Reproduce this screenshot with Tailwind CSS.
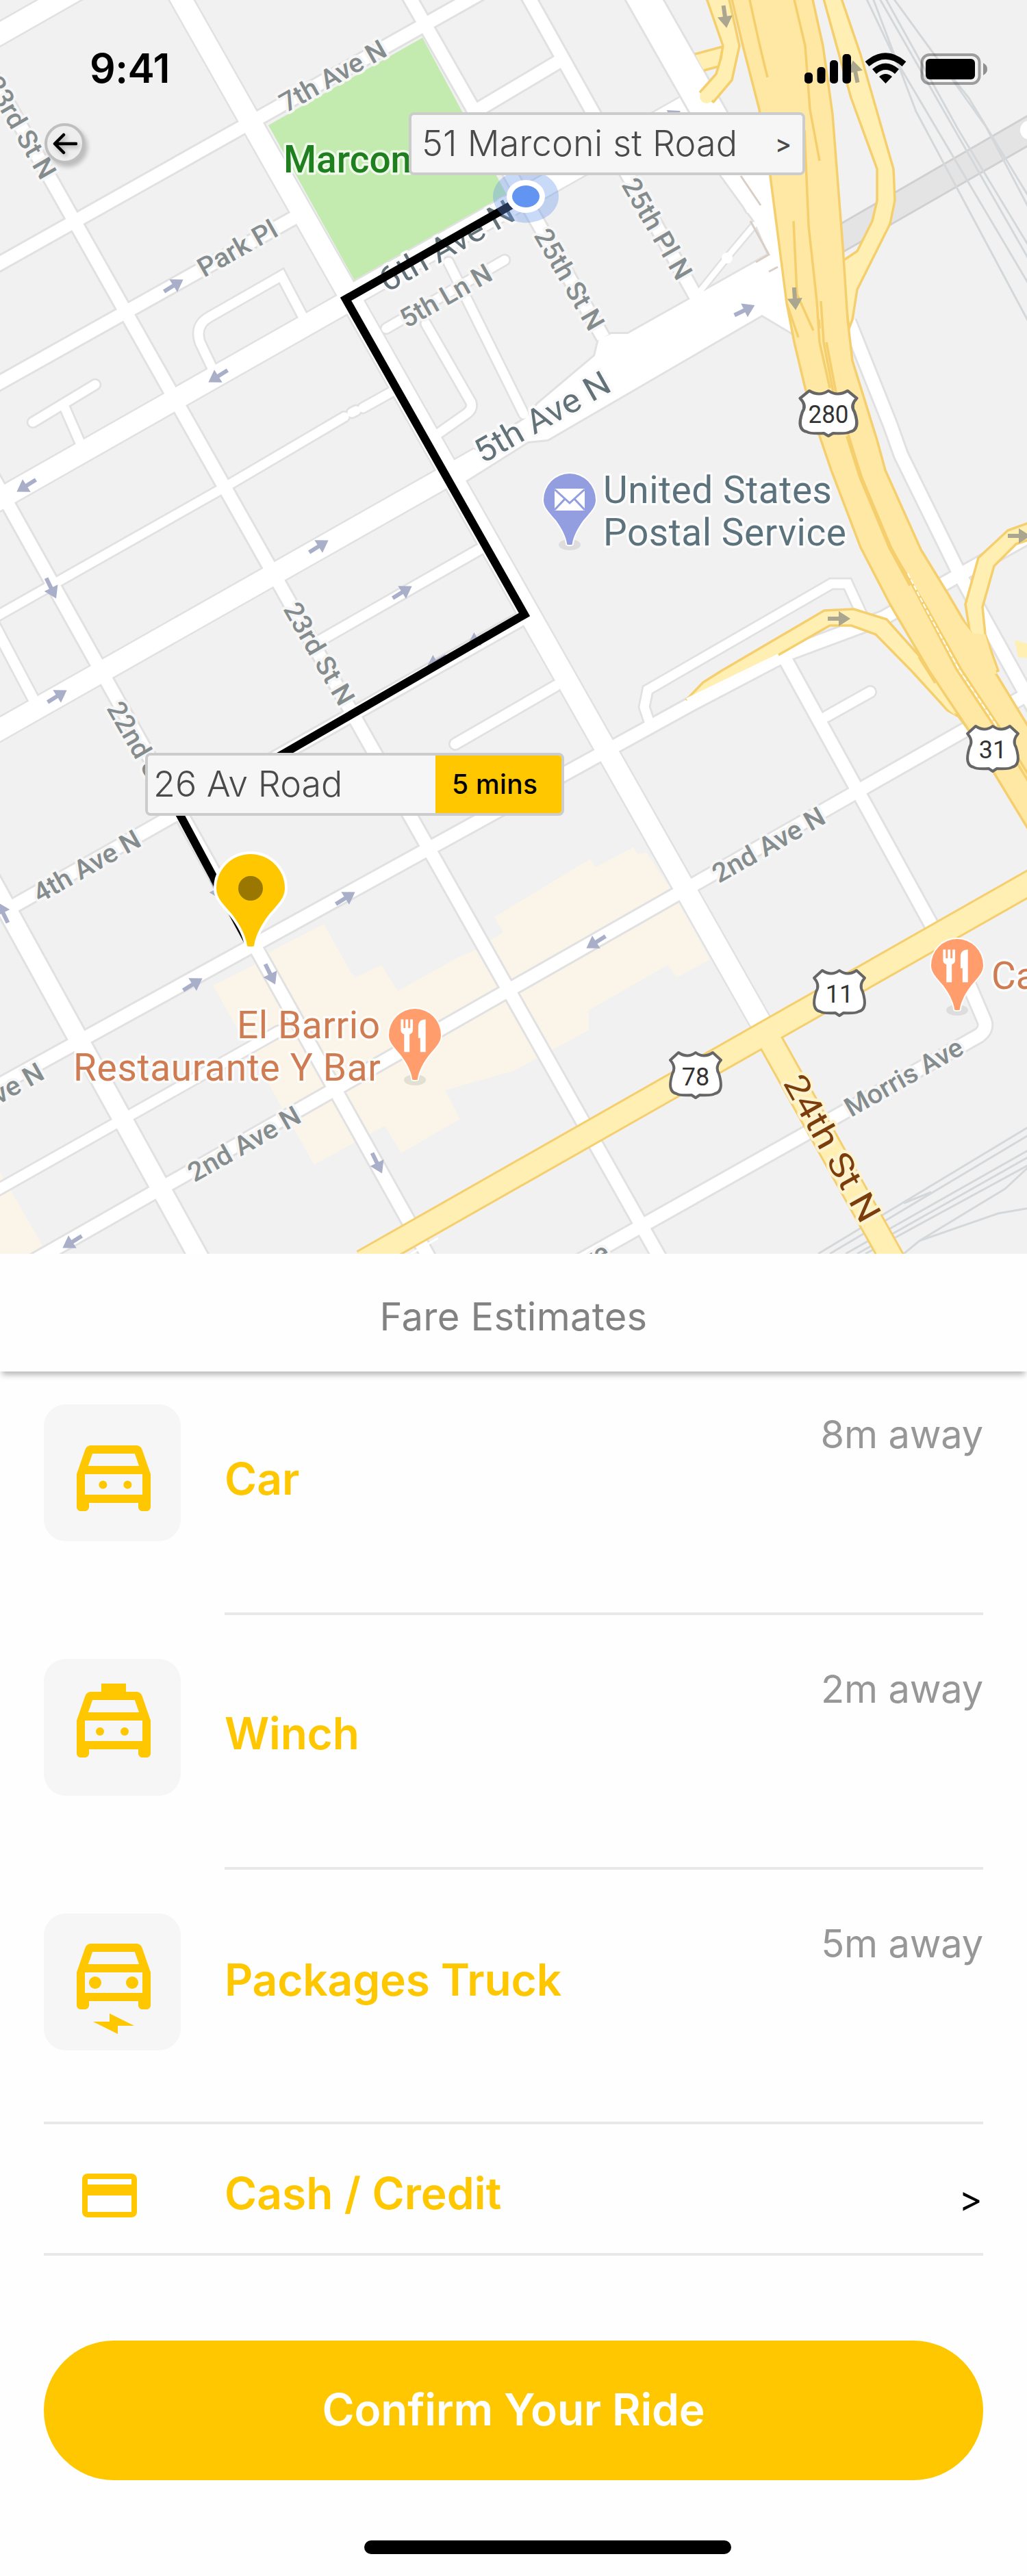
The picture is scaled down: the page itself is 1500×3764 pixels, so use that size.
<!DOCTYPE html>
<html lang="en">
<head>
<meta charset="utf-8">
<title>Fare Estimates</title>
<script src="https://cdn.jsdelivr.net/npm/@tailwindcss/browser@4"></script>
</head>
<body class="bg-white font-['Inter',sans-serif]">
<main class="w-[1500px] h-[3764px] flex flex-col bg-[#fefefe] overflow-hidden">

<!-- Map -->
<section class="relative h-[1832px] w-full shrink-0 overflow-hidden">
<svg class="block w-[1500px] h-[1832px]" viewBox="0 0 1500 1832" fill="none">
<defs>
<path id="w46" d="M930-20L1112 300"/>
<path id="w30" d="M254-20L1124 1517M-40 72L120-19M-20 1077L700 669M500 439L1000 156M-30 746L500 445"/>
<path id="w27" d="M-20 1274L300 1855"/>
<path id="w18" d="M-85-20L971 1851M-20 396L702-10M-20 570L430 318M589-20L881 493M763-20L1020 440M-20 680L634 1851M690 165L816 90M0 1335L764 903M-20 1596L1011 1028L1150 955L1290 903L1396 843L1500 785M34 1851L1500 1015M1148 965L1364 1358M1240 470L1300 620L1316 665L1402 840L1510 1035M840 1846L1176 1657L1430 1513Q1442 1504 1438 1492L1405 1415"/>
<path id="w15" d="M665 1087L812 1002M1207 1047L1271 1011M-20 1748L407 1507M-30 872L48 1020M700 803L455 943"/>
<path id="w13" d="M48 617L139 562M93 592L117 647M-20 909L328 712L503 609M514 603L520 600M530 596L575 571M311 540L292 500Q284 475 306 463L411 403L442 462M564 480L737 380M655 383L765 605M622 473L688 588Q691 597 682 604L638 635M950 1060L941 1033L946 1008L1214 853H1238L1262 905"/>
<path id="ave5" d="M655 682L767 612L786 590L869 520L875 495L893 488H917L1006 438L1123 372L1102 323L1054 257L1040 230L1140 230L1180 500L1113 460L1044 500L800 642L771 645L665 712Z"/>
<path id="pin" d="M0 135C-1 135-5 135-5 134C-7 118-17 101-27 88C-40 73-50 64-50 50A50 50 0 0 1 50 50C50 64 40 73 27 88C17 101 7 118 5 134C5 135 1 135 0 135Z"/>
<path id="arrow" d="M-17-3H-1V-11L16 0L-1 11V3H-17Z"/>
<path id="shield" d="M-25-33Q-12-24 0-33Q12-24 25-33L37-22Q28-12 34-2Q42 24 28 27Q24 30 6 29L0 33L-6 29Q-24 30-28 27Q-42 24-34-2Q-28-12-37-22Z" fill="#fff" stroke="#666" stroke-width="4" stroke-linejoin="round"/>
<g id="fork" fill="#fff"><path d="M-21-31h4v17h3v-17h4v17h3v-17h4v21q0 5-5 8v34h-8v-34q-5-3-5-8zM5-17q0-14 11-14v63h-8v-27h-3z"/></g>
</defs>
<rect width="1500" height="1832" fill="#f1f1f1"/>
<!-- beige commercial blocks -->
<path fill="#fbf4e8" d="M311 1440L371 1410L390 1393L473 1350L512 1420L519 1428L557 1410L581 1448L667 1400L696 1387L735 1362L722 1340L750 1323L862 1255L870 1267L925 1238L931 1248L944 1245L980 1300L1037 1402L989 1428L975 1410L848 1483L860 1505L750 1565L650 1593L672 1635L586 1685L562 1645L540 1657L459 1702Z"/>
<path fill="#fbf4e8" d="M650 1593L860 1473L860 1505L800 1536L745 1538ZM0 1712L62 1820L43 1832H0Z"/>
<!-- park -->
<path fill="#c3ebb0" d="M617 55L392 183L519 412L742 288Z"/>
<!-- rail corridor -->
<path fill="#e4e4e4" stroke="#d0d0d0" stroke-width="3" d="M1228 327L1510 164V208L1228 370Z"/>
<g stroke="#d4d8da" stroke-width="3">
<path d="M1264-5L1314 100L1338 163L1510 485M1274-5L1310 90L1510 428M1283-5L1510 392M1292-5L1400 190L1510 372M1303-5L1367 83L1415 143L1510 300M1390 115L1440 185L1510 318"/>
<path d="M1195 1832L1510 1642M1212 1832L1510 1654M1235 1832L1510 1676M1252 1832L1510 1686M1264 1832L1510 1698M1320 1832L1343 1813L1468 1737L1510 1698M1343 1813L1458 1773L1510 1764M1320 1758L1360 1742"/>
</g>
<circle cx="1504" cy="190" r="14" fill="#fff"/>
<!-- street casing -->
<g stroke="#e1e1e1">
<use href="#w46" stroke-width="52"/><use href="#w30" stroke-width="35"/><use href="#w27" stroke-width="33"/><use href="#w18" stroke-width="24.500"/>
<g stroke-linecap="round"><use href="#w15" stroke-width="20"/><use href="#w13" stroke-width="18.500"/></g>
<use href="#ave5" stroke-width="6"/>
<path d="M1022 426L1062 376L1104 326" stroke-width="13"/>
</g>
<!-- street surface -->
<g stroke="#fff">
<use href="#w46" stroke-width="46"/><use href="#w30" stroke-width="30"/><use href="#w27" stroke-width="27"/><use href="#w18" stroke-width="18.500"/>
<g stroke-linecap="round"><use href="#w15" stroke-width="14.500"/><use href="#w13" stroke-width="13"/></g>
<use href="#ave5" fill="#fff" stroke="none"/>
<path d="M1022 426L1062 376L1104 326" stroke-width="8"/>
</g>
<circle cx="1062" cy="377" r="8" fill="#fff"/>
<path stroke="#d9cfc6" stroke-width="3" d="M1082 257L1111 300M1096 323L1123 372L1104 383M1123 397L1136 390"/>
<!-- secondary yellow roads -->
<g stroke-linejoin="round">
<path d="M530 1844L1520 1281M1120 1512L1309 1850" stroke="#f5cf6d" stroke-width="38"/>
<path d="M530 1844L1520 1281M1120 1512L1309 1850" stroke="#ffefb3" stroke-width="32"/>
<path d="M600 1832L640 1809" stroke="#fff" stroke-width="3"/>
<g stroke="#f5cf6d" stroke-width="3.500" fill="#ffefb3">
<path d="M1003 1022L1027 997L1054 980L1204 892L1247 890L1295 905L1362 980L1430 1080L1415 1067L1400 1047L1384 1038L1331 980L1279 927L1243 914H1212L1137 957Z"/>
<path d="M1202-5L1243 143L1281 247V293L1274 323L1252 367L1228 383L1240 480L1245 467L1252 423L1300 327L1307 293L1305 247L1257 80L1228-5Z"/>
<path d="M1505 763L1472 775L1429 815L1410 883L1417 927L1440 985L1458 980L1439 927L1435 887L1452 827L1484 795L1505 788Z"/>
<path d="M1015 79L1056 68L1050 97L1028 103"/>
<path d="M1031-5L1056 67L1053 85L1046 108L1023 134L1042 149L1069 117L1080 67L1064-5Z"/>
<path d="M1482 935L1505 942V962L1487 960" stroke="none"/>
</g>
<path d="M1003 1022L1137 957" stroke="#fff" stroke-width="4"/>
<circle cx="1032" cy="141" r="10" fill="#ffefb3"/>
<!-- highway -->
<path fill="#fee8a3" stroke="#f5cf6d" stroke-width="3.500" d="M1068-5L1085 67L1109 160L1125 257L1149 443L1160 500L1176 567L1197 637L1214 687L1257 800L1300 883L1357 980L1415 1067L1451 1128L1510 1225V1075L1460 993L1430 945L1386 870L1345 803L1293 687L1281 643L1245 527L1238 467L1231 360L1216 167L1202 67L1186-5Z"/>
<path fill="#fee8a3" d="M1400 900L1420 925L1439 927L1456 985L1420 980Z"/>
<path fill="#ffefb3" d="M1322 960L1345 962L1396 1046L1384 1036Z"/>
<g stroke="#f5cf6d" stroke-width="3.500">
<path d="M1094-5Q1110 70 1121 113M1159-5L1176 67L1183 160L1197 235M1175 190L1181 330L1193 440L1197 500L1212 567M1159 323L1164 430L1188 483M1149 443L1166 493M1199 440L1203 500L1217 573M1207 500L1221 573L1257 697L1300 800L1353 887L1405 980L1458 1060L1510 1145"/>
<path stroke-width="6" d="M1238 637L1257 697L1300 800L1330 855"/>
<path d="M1196 467L1197 480M1330 850L1397 978L1458 1070L1510 1155M1342 960L1366 998"/>
</g>
<path stroke="#fff" stroke-width="2" stroke-dasharray="7 3" d="M1326 838L1350 885L1401 979L1458 1064"/>
</g>

<!-- one-way arrows -->
<g fill="#a9aec9">
<use href="#arrow" transform="translate(254 417) rotate(-32)"/><use href="#arrow" transform="translate(318 550) rotate(148)"/><use href="#arrow" transform="translate(38 710) rotate(148)"/><use href="#arrow" transform="translate(75 860) rotate(64)"/><use href="#arrow" transform="translate(466 798) rotate(-32)"/><use href="#arrow" transform="translate(588 865) rotate(-32)"/><use href="#arrow" transform="translate(1088 453) rotate(-26)"/><use href="#arrow" transform="translate(980 170) rotate(-30)"/><use href="#arrow" transform="translate(84 1017) rotate(-32)"/><use href="#arrow" transform="translate(505 1312) rotate(-32)"/><use href="#arrow" transform="translate(4 1333) rotate(-116)"/><use href="#arrow" transform="translate(870 1377) rotate(148)"/><use href="#arrow" transform="translate(282 1438) rotate(-32)"/><use href="#arrow" transform="translate(395 1424) rotate(64)"/><use href="#arrow" transform="translate(551 1700) rotate(64)"/><use href="#arrow" transform="translate(105 1815) rotate(148)"/><use href="#arrow" transform="translate(697 934) rotate(150)"/><use href="#arrow" transform="translate(637 967) rotate(150)"/><use href="#arrow" transform="translate(316 1300) rotate(64)"/>
</g>
<g fill="#aaa68f">
<use href="#arrow" transform="translate(1059 25) rotate(82)"/><use href="#arrow" transform="translate(1161 437) rotate(86)"/><use href="#arrow" transform="translate(1249 104) rotate(-102)"/><use href="#arrow" transform="translate(1226 904)"/><use href="#arrow" transform="translate(1489 783)"/>
</g>

<!-- street names -->
<g class="font-['Roboto',sans-serif] font-medium" font-size="39" fill="#858c8d" stroke="#f6f6f6" stroke-width="8" stroke-linejoin="round" paint-order="stroke">
<text transform="translate(418 165) rotate(-29.500)" textLength="172" lengthAdjust="spacingAndGlyphs">7th Ave N</text>
<text transform="translate(298 406) rotate(-29.500)" textLength="127" lengthAdjust="spacingAndGlyphs">Park Pl</text>
<text transform="translate(594 480) rotate(-29.500)" textLength="147" lengthAdjust="spacingAndGlyphs">5th Ln N</text>
<text transform="translate(779 344) rotate(60)" textLength="164" lengthAdjust="spacingAndGlyphs">25th St N</text>
<text transform="translate(907 270) rotate(60)" textLength="164" lengthAdjust="spacingAndGlyphs">25th Pl N</text>
<text transform="translate(-23 121) rotate(60)" textLength="166" lengthAdjust="spacingAndGlyphs">23rd St N</text>
<text transform="translate(413 890) rotate(60)" textLength="166" lengthAdjust="spacingAndGlyphs">23rd St N</text>
<text transform="translate(155 1035) rotate(60)" textLength="172" lengthAdjust="spacingAndGlyphs">22nd St N</text>
<text transform="translate(58 1320) rotate(-29.500)" textLength="173" lengthAdjust="spacingAndGlyphs">4th Ave N</text>
<text transform="translate(-85 1661) rotate(-29.500)" textLength="175" lengthAdjust="spacingAndGlyphs">3rd Ave N</text>
<text transform="translate(284 1728) rotate(-29.500)" textLength="182" lengthAdjust="spacingAndGlyphs">2nd Ave N</text>
<text transform="translate(1050 1291) rotate(-29.500)" textLength="182" lengthAdjust="spacingAndGlyphs">2nd Ave N</text>
<text transform="translate(1243 1633) rotate(-29.500)" textLength="192" lengthAdjust="spacingAndGlyphs">Morris Ave</text>
<text transform="translate(726 1932) rotate(-29.500)" textLength="192" lengthAdjust="spacingAndGlyphs">Morris Ave</text>
</g>
<g class="font-['Roboto',sans-serif]" font-size="49" fill="#627278" stroke="#fafafa" stroke-width="8" stroke-linejoin="round" paint-order="stroke">
<text transform="translate(565 428) rotate(-29.500)" textLength="219" lengthAdjust="spacingAndGlyphs">6th Ave N</text>
<text transform="translate(705 678) rotate(-29.500)" textLength="219" lengthAdjust="spacingAndGlyphs">5th Ave N</text>
<text transform="translate(1143 1582) rotate(61)" textLength="238" lengthAdjust="spacingAndGlyphs" fill="#7b3d0c" stroke="#fdf3cf">24th St N</text>
</g>
<g class="font-['Roboto',sans-serif]" font-size="55" stroke="#fff" stroke-opacity=".75" stroke-width="7" stroke-linejoin="round" paint-order="stroke">
<g fill="#5c737e"><text x="881" y="735" textLength="334">United States</text><text x="881" y="797" textLength="355">Postal Service</text></g>
<g fill="#cf7c52"><text x="346" y="1517" textLength="209">El Barrio</text><text x="107" y="1579" textLength="449">Restaurante Y Bar</text><text x="1448" y="1445">Cafe</text></g>
<text x="414" y="252" fill="#1f7f1f" class="font-medium">Marconi</text>
</g>

<!-- route shields -->
<g class="font-['Roboto',sans-serif]" font-size="36" fill="#333" text-anchor="middle">
<use href="#shield" transform="translate(1210 604) scale(1.12 1)"/><text x="1210" y="618" textLength="59" lengthAdjust="spacingAndGlyphs">280</text>
<use href="#shield" transform="translate(1450 1094)"/><text x="1450" y="1108">31</text>
<use href="#shield" transform="translate(1226 1451)"/><text x="1226" y="1465">11</text>
<use href="#shield" transform="translate(1016 1571)"/><text x="1016" y="1586">78</text>
</g>

<!-- places -->
<ellipse cx="832" cy="796" rx="16" ry="8" fill="#ddd"/><ellipse cx="606" cy="1578" rx="16" ry="8" fill="#e2dfd3"/><ellipse cx="1398" cy="1476" rx="16" ry="8" fill="#ddd"/>
<g stroke="#fff" stroke-width="5" paint-order="stroke">
<use href="#pin" transform="translate(832 692) scale(.76 .77)" fill="#929ee0"/>
<use href="#pin" transform="translate(606 1474) scale(.76 .77)" fill="#ff9e6c"/>
<use href="#pin" transform="translate(1398 1372) scale(.76 .77)" fill="#ff9e6c"/>
</g>
<path fill="#fff" d="M810 714H854V746H810Z"/><path stroke="#929ee0" stroke-width="3" d="M810 715L832 735L854 715M810 745L826 728M854 745L838 728"/>
<use href="#fork" transform="translate(606 1513) scale(.98 .76)"/><use href="#fork" transform="translate(1398 1411) scale(.98 .76)"/>

<!-- trip route -->
<path stroke="#000" stroke-width="12" d="M769 287L505 437L766 898L262 1189L366 1383"/>
<ellipse cx="768" cy="287" rx="48" ry="38.500" fill="#6495ed" fill-opacity=".35"/>
<ellipse cx="768" cy="287" rx="28" ry="24" fill="#fff"/><ellipse cx="768" cy="287" rx="20" ry="16" fill="#6294f2"/>
<use href="#pin" transform="translate(366 1248)" fill="#ffc700" stroke="#fff" stroke-width="8" paint-order="stroke"/>
<circle cx="366" cy="1298" r="18" fill="#997700"/>

<!-- status bar glyphs -->
<g fill="#000">
<rect x="1175" y="106" width="12" height="16" rx="5"/><rect x="1193.500" y="98" width="12" height="24" rx="5"/><rect x="1212" y="88" width="12" height="34" rx="5"/><rect x="1230.500" y="79" width="12.500" height="43" rx="5"/>
<path d="M1293.500 122L1284 112Q1293.500 104 1303 112Z"/>
</g>
<path stroke="#000" stroke-width="9" d="M1277 104.500Q1293.500 90 1310 104.500M1266.500 93.500Q1293.500 70.500 1320.500 93.500"/>
<rect x="1346.500" y="80" width="84" height="42" rx="11" stroke="#000" stroke-opacity=".35" stroke-width="4"/>
<rect x="1352" y="86" width="72" height="30" rx="6" fill="#000"/>
<path d="M1436 92Q1442 95 1442 101Q1442 107 1436 110Z" fill="#000" fill-opacity=".4"/>
</svg>

<div class="absolute left-[131px] top-[69px] text-[59px] leading-[62px] font-semibold tracking-[-0.5px] text-black whitespace-nowrap">9:41</div>
<div class="absolute left-[65px] top-[180px] size-[59px] rounded-full border-[4px] border-[#bfbfbf] bg-[#eeeeee] shadow-[4px_5px_6px_rgba(0,0,0,0.22)] flex items-center justify-center">
<svg class="w-[36px] h-[32px] drop-shadow-[3px_3px_3px_rgba(0,0,0,0.3)]" viewBox="0 0 36 32" fill="none" stroke="#000" stroke-width="4.500" stroke-linecap="round" stroke-linejoin="round"><path d="M34 16H3M16 3L3 16L16 29" /></svg>
</div>
<div class="absolute left-[597px] top-[164px] w-[579px] h-[92px] rounded-[8px] border-4 border-[#cccccc] bg-[#f6f6f6] flex items-center justify-between pl-[15px] pr-[16px] text-[#4a4a4a]">
<span class="text-[52px] leading-none font-light tracking-[0.25px] whitespace-nowrap">51 Marconi st Road</span><span class="text-[36px] leading-none font-medium">&gt;</span>
</div>
<div class="absolute left-[212px] top-[1100px] w-[612px] h-[92px] rounded-[8px] border-4 border-[#cccccc] bg-[#f6f6f6] flex items-stretch overflow-hidden">
<span class="w-[420px] pl-[8px] flex items-center text-[52px] font-light text-[#4a4a4a] whitespace-nowrap">26 Av Road</span>
<span class="flex-1 bg-[#ffc700] flex items-center pl-[24px] text-[39px] font-medium tracking-[0.3px] text-black whitespace-nowrap">5 mins</span>
</div>
</section>

<!-- Header -->
<header class="relative h-[172px] shrink-0 bg-[#fefefe] shadow-[0_8px_8px_-3px_rgba(0,0,0,0.27)] flex items-center justify-center pt-[11px] text-[56px] leading-none tracking-[0.25px] text-[#828282]">Fare Estimates</header>

<!-- Ride options -->
<section class="pt-[48px] px-[64px] shrink-0">
<div class="flex h-[372px]">
<div class="size-[200px] shrink-0 rounded-[32px] bg-[#f6f6f6] pl-[30px] pt-[36px]">
<svg class="size-[144px]" viewBox="0 0 24 24" fill="#ffc700"><path fill-rule="evenodd" d="M18.920 5.010C18.720 4.420 18.160 4 17.500 4h-11c-.66 0-1.210.42-1.420 1.010L3 11v8c0 .55.45 1 1 1h1c.55 0 1-.45 1-1v-1h12v1c0 .55.45 1 1 1h1c.55 0 1-.45 1-1v-8zM6.850 6h10.290l1.040 3H5.810zM19 16H5v-5h14z"/><circle cx="9.400" cy="13.600" r="1"/><circle cx="15.400" cy="13.600" r="1"/></svg>
</div>
<div class="ml-[64px] flex-1 h-[308px] border-b-4 border-[#e8e8e8] flex justify-between items-start">
<span class="mt-[77px] text-[64px] leading-none font-semibold text-[#ffc700]">Car</span>
<span class="mt-[16px] text-[56px] leading-none tracking-[-0.2px] text-[#979797]">8m away</span>
</div>
</div>
<div class="flex h-[372px]">
<div class="size-[200px] shrink-0 rounded-[32px] bg-[#f6f6f6] pl-[30px] pt-[18px]">
<svg class="size-[144px]" viewBox="0 0 24 24" fill="#ffc700"><path fill-rule="evenodd" d="M18.920 6.010C18.720 5.420 18.160 5 17.500 5H15V3H9v2H6.500c-.66 0-1.210.42-1.420 1.010L3 12v8c0 .55.45 1 1 1h1c.55 0 1-.45 1-1v-1h12v1c0 .55.45 1 1 1h1c.55 0 1-.45 1-1v-8zM6.850 7h10.290l1.040 3H5.810zM19 17H5v-5h14z"/><circle cx="8.670" cy="14.670" r="1"/><circle cx="14.670" cy="14.670" r="1"/></svg>
</div>
<div class="ml-[64px] flex-1 h-[308px] border-b-4 border-[#e8e8e8] flex justify-between items-start">
<span class="mt-[77px] text-[64px] leading-none font-semibold tracking-[-0.2px] text-[#ffc700]">Winch</span>
<span class="mt-[16px] text-[56px] leading-none tracking-[-0.2px] text-[#979797]">2m away</span>
</div>
</div>
<div class="flex h-[304px]">
<div class="size-[200px] shrink-0 rounded-[32px] bg-[#f6f6f6] pl-[30px] pt-[38px]">
<svg class="size-[144px]" viewBox="0 0 24 24" fill="#ffc700"><path fill-rule="evenodd" d="M18.920 2.010C18.720 1.420 18.160 1 17.500 1h-11c-.66 0-1.210.42-1.420 1.010L3 8v8c0 .55.45 1 1 1h1c.55 0 1-.45 1-1v-1h12v1c0 .55.45 1 1 1h1c.55 0 1-.45 1-1V8zM6.850 3h10.290l1.040 3H5.810zM19 13H5V8h14z"/><circle cx="7.500" cy="10.500" r="1.500"/><circle cx="16.500" cy="10.500" r="1.500"/><path d="M7 20h4v-2l6 3h-4v2z"/></svg>
</div>
<div class="ml-[64px] flex-1 flex justify-between items-start">
<span class="mt-[65px] text-[64px] leading-none font-semibold tracking-[-0.15px] text-[#ffc700]">Packages Truck</span>
<span class="mt-[16px] text-[56px] leading-none tracking-[-0.2px] text-[#979797]">5m away</span>
</div>
</div>
<!-- Payment -->
<div class="h-[196px] border-y-4 border-[#e8e8e8] flex items-center">
<svg class="size-[96px] ml-[48px] mt-[20px] shrink-0" viewBox="0 0 24 24" fill="#ffc700"><path fill-rule="evenodd" d="M20 4H4c-1.110 0-1.990.89-1.990 2L2 18c0 1.110.89 2 2 2h16c1.110 0 2-.89 2-2V6c0-1.110-.89-2-2-2zM20 18H4v-6h16zM20 8H4V6h16z"/></svg>
<span class="ml-[120px] mt-[14px] flex-1 text-[64px] leading-none font-semibold tracking-[0.1px] text-[#ffc700]">Cash / Credit</span>
<span class="mt-[30px] mr-[1px] text-[52px] leading-none text-black">&gt;</span>
</div>
</section>

<button class="mx-[64px] mt-[124px] h-[204px] pb-[3px] shrink-0 rounded-full bg-[#ffc700] text-[64px] leading-none font-semibold tracking-[-0.2px] text-white">Confirm Your Ride</button>
<div class="mt-[88px] ml-[532px] w-[536px] h-[20px] shrink-0 rounded-full bg-black"></div>
</main>
</body>
</html>
